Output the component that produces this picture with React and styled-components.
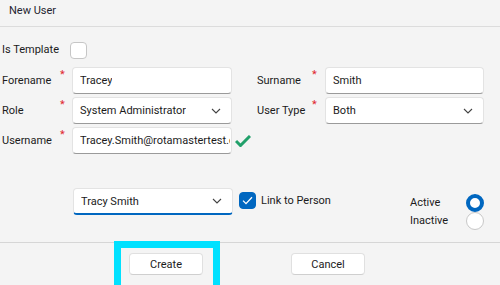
import React from 'react'
import styled, { createGlobalStyle } from 'styled-components'

const GlobalStyle = createGlobalStyle`
  html, body {
    margin: 0;
    padding: 0;
    background: #f4f4f4;
  }
  body {
    font-family: Roboto, "Noto Sans", sans-serif;
    font-size: 11px;
    color: #1b1b1b;
  }
`

const Page = styled.div`
  width: 500px;
  height: 285px;
  overflow: hidden;
  background: #f4f4f4;
  display: flex;
  flex-direction: column;
`

const Header = styled.div`
  height: 27px;
  box-sizing: border-box;
  border-bottom: 1px solid #dcdcdc;
  padding: 4px 0 0 9px;
  display: flex;
  align-items: flex-start;
  color: #1f2430;
`

const Body = styled.div`
  padding: 14px 0 0 2px;
  height: 215px;
  box-sizing: border-box;
  display: flex;
  flex-direction: column;
`

const TemplateRow = styled.div`
  display: flex;
  align-items: center;
  gap: 11px;
  height: 18px;
`

const Label = styled.span`
  white-space: nowrap;
  line-height: 18px;
`

const Box = styled.span`
  width: 17px;
  height: 17px;
  box-sizing: border-box;
  border-radius: 4px;
  border: 1px solid ${p => (p.checked ? '#0067c0' : '#c6c6c6')};
  background: ${p => (p.checked ? '#0067c0' : '#ffffff')};
  display: inline-flex;
  align-items: center;
  justify-content: center;
  flex: none;
`

const FormGrid = styled.div`
  margin-top: 8px;
  display: grid;
  grid-template-columns: 58px 12px 160px 25px 55px 13px 159px;
  grid-auto-rows: 27px;
  row-gap: 3px;
  align-items: center;
`

const Required = styled.span`
  color: #e0242f;
  font-size: 11px;
  align-self: start;
  line-height: 12px;
  padding-top: 2px;
`

const Field = styled.div`
  height: 27px;
  box-sizing: border-box;
  background: #fff;
  border: 1px solid #e3e3e3;
  border-bottom-color: ${p => (p.focused ? '#0067c0' : '#9a9a9a')};
  border-bottom-width: ${p => (p.focused ? '2px' : '1px')};
  border-radius: 4px;
  display: flex;
  align-items: center;
  padding: 0 ${p => (p.tight ? '1px' : '10px')} 0 7px;
  overflow: hidden;
  white-space: nowrap;
  justify-content: space-between;
`

const FieldText = styled.span`
  overflow: hidden;
  white-space: nowrap;
`

const CheckCell = styled.div`
  grid-column: 4;
  display: flex;
  align-items: center;
  padding-left: 3px;
`

const Spacer = styled.span``

const LinkRow = styled.div`
  margin-top: 34px;
  display: flex;
  align-items: flex-start;
  padding-left: 71px;
`

const LinkSelect = styled(Field)`
  width: 160px;
  height: 27px;
`

const LinkCheck = styled.label`
  display: flex;
  align-items: center;
  gap: 5px;
  margin-left: 6px;
  margin-top: 4px;
`

const StatusGroup = styled.div`
  margin-left: auto;
  margin-right: 16px;
  display: grid;
  grid-template-columns: 56px 18px;
  grid-auto-rows: 18px;
  align-items: center;
  margin-top: 6px;
`

const Radio = styled.span`
  width: 18px;
  height: 18px;
  box-sizing: border-box;
  border-radius: 50%;
  background: #fff;
  border: ${p => (p.checked ? '4px solid #0067c0' : '1px solid #c8c8c8')};
`

const Footer = styled.div`
  flex: 1;
  border-top: 1px solid #d6d6d6;
  display: flex;
  justify-content: center;
  gap: 88px;
  padding: 10px 6px 0 0;
  align-items: flex-start;
`

const ButtonWrap = styled.div`
  position: relative;
`

const Highlight = styled.span`
  position: absolute;
  left: -15px;
  right: -17px;
  top: -12px;
  bottom: -20px;
  border: 7px solid #00e1ff;
  pointer-events: none;
`

const Button = styled.button`
  width: 74px;
  height: 22px;
  box-sizing: border-box;
  background: #fff;
  border: 1px solid #e0e0e0;
  border-bottom-color: #cfcfcf;
  border-radius: 4px;
  font-family: inherit;
  font-size: 11px;
  color: #1b1b1b;
  padding: 0;
`

const Chevron = () => (
  <svg width="10" height="6" viewBox="0 0 10 6">
    <path d="M1 1 L5 5 L9 1" fill="none" stroke="#444" strokeWidth="1.1" />
  </svg>
)

const Tick = () => (
  <svg width="16" height="12" viewBox="0 0 16 12">
    <path d="M1 6 L5.5 10.5 L15 1" fill="none" stroke="#21a06a" strokeWidth="3" />
  </svg>
)

const BoxTick = () => (
  <svg width="11" height="9" viewBox="0 0 11 9">
    <path d="M1 4.6 L4 7.6 L10 1.2" fill="none" stroke="#fff" strokeWidth="1.3" />
  </svg>
)

function App() {
  return (
    <Page>
      <GlobalStyle />
      <Header>New User</Header>
      <Body>
        <TemplateRow>
          <Label>Is Template</Label>
          <Box />
        </TemplateRow>
        <FormGrid>
          <Label>Forename</Label>
          <Required>*</Required>
          <Field><FieldText>Tracey</FieldText></Field>
          <Spacer />
          <Label>Surname</Label>
          <Required>*</Required>
          <Field><FieldText>Smith</FieldText></Field>

          <Label>Role</Label>
          <Required>*</Required>
          <Field><FieldText>System Administrator</FieldText><Chevron /></Field>
          <Spacer />
          <Label>User Type</Label>
          <Required>*</Required>
          <Field><FieldText>Both</FieldText><Chevron /></Field>

          <Label>Username</Label>
          <Required>*</Required>
          <Field tight><FieldText>Tracey.Smith@rotamastertest.com</FieldText></Field>
          <CheckCell><Tick /></CheckCell>
        </FormGrid>
        <LinkRow>
          <LinkSelect focused><FieldText>Tracy Smith</FieldText><Chevron /></LinkSelect>
          <LinkCheck>
            <Box checked><BoxTick /></Box>
            <span>Link to Person</span>
          </LinkCheck>
          <StatusGroup>
            <Label>Active</Label>
            <Radio checked />
            <Label>Inactive</Label>
            <Radio />
          </StatusGroup>
        </LinkRow>
      </Body>
      <Footer>
        <ButtonWrap>
          <Highlight />
          <Button>Create</Button>
        </ButtonWrap>
        <ButtonWrap>
          <Button>Cancel</Button>
        </ButtonWrap>
      </Footer>
    </Page>
  )
}

export default App
